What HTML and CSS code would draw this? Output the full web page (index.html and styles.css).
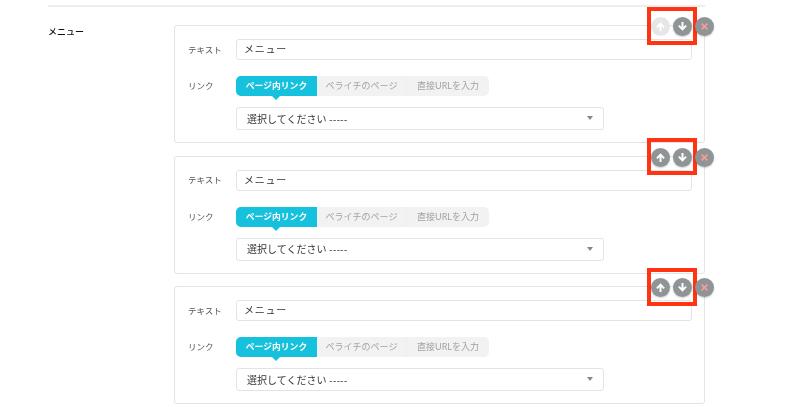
FILE: index.html
```html
<!DOCTYPE html>
<html lang="ja">
<head>
<meta charset="utf-8">
<title>メニュー</title>
<link rel="stylesheet" href="styles.css">
</head>
<body>
<svg class="defs" width="0" height="0" aria-hidden="true">
  <symbol id="up" viewBox="0 0 19 19"><path d="M9.5 5.2 13.8 9.8 12.500 11 10.500 9v5h-2V9l-2 2-1.300-1.200z"/></symbol>
  <symbol id="down" viewBox="0 0 19 19"><path d="M9.5 13.800 5.200 9.200 6.500 8l2 2V5h2v5l2-2 1.300 1.200z"/></symbol>
  <symbol id="x" viewBox="0 0 19 19"><path d="m7.300 6 2.200 2.200L11.700 6 13 7.300 10.800 9.500 13 11.700 11.700 13 9.500 10.800 7.300 13 6 11.700 8.200 9.500 6 7.300z"/></symbol>
</svg>
<main class="section">
  <div class="row">
    <div class="row-label">メニュー</div>
    <div class="cards">
      <section class="card">
        <div class="field field-text"><span class="field-label">テキスト</span><div class="input">メニュー</div></div>
        <div class="field field-link"><span class="field-label">リンク</span>
          <div class="tabs"><span class="tab tab-active">ページ内リンク</span><span class="tab tab-b">ペライチのページ</span><span class="tab tab-c">直接URLを入力</span></div>
        </div>
        <div class="select"><span>選択してください -----</span><i class="caret"></i></div>
        <div class="highlight"></div>
        <div class="actions">
          <span class="btn btn-off"><svg><use href="#up"/></svg></span>
          <span class="btn"><svg><use href="#down"/></svg></span>
          <span class="btn btn-x"><svg><use href="#x"/></svg></span>
        </div>
      </section>
      <section class="card">
        <div class="field field-text"><span class="field-label">テキスト</span><div class="input">メニュー</div></div>
        <div class="field field-link"><span class="field-label">リンク</span>
          <div class="tabs"><span class="tab tab-active">ページ内リンク</span><span class="tab tab-b">ペライチのページ</span><span class="tab tab-c">直接URLを入力</span></div>
        </div>
        <div class="select"><span>選択してください -----</span><i class="caret"></i></div>
        <div class="highlight"></div>
        <div class="actions">
          <span class="btn"><svg><use href="#up"/></svg></span>
          <span class="btn"><svg><use href="#down"/></svg></span>
          <span class="btn btn-x"><svg><use href="#x"/></svg></span>
        </div>
      </section>
      <section class="card">
        <div class="field field-text"><span class="field-label">テキスト</span><div class="input">メニュー</div></div>
        <div class="field field-link"><span class="field-label">リンク</span>
          <div class="tabs"><span class="tab tab-active">ページ内リンク</span><span class="tab tab-b">ペライチのページ</span><span class="tab tab-c">直接URLを入力</span></div>
        </div>
        <div class="select"><span>選択してください -----</span><i class="caret"></i></div>
        <div class="highlight"></div>
        <div class="actions">
          <span class="btn"><svg><use href="#up"/></svg></span>
          <span class="btn"><svg><use href="#down"/></svg></span>
          <span class="btn btn-x"><svg><use href="#x"/></svg></span>
        </div>
      </section>
    </div>
  </div>
</main>
</body>
</html>
```
FILE: styles.css
```css
* { box-sizing: border-box; }
html, body { margin: 0; height: 407px; overflow: hidden; background: #fff; }
body { font-family: Lato, "Noto Sans CJK JP", sans-serif; color: #333; font-size: 10px; }
.defs { position: absolute; }
.section { margin: 5px 95px 0 48px; border-top: 2px solid #eeeeee; padding-top: 18px; filter: blur(.3px); }
.row { display: flex; }
.row-label { width: 126px; color: #111; font-size: 9px; line-height: 14px; font-weight: 500; }
.cards { flex: 1; display: flex; flex-direction: column; gap: 12.5px; }
.card { position: relative; height: 118px; border: 1px solid #e3e3e3; border-radius: 3px; padding: 13px 12px 0 13px; }
.field { display: flex; align-items: center; }
.field-label { width: 48px; font-size: 8.5px; color: #555; padding-bottom: 2px; }
.field-text { height: 21px; }
.input { flex: 1; height: 21px; border: 1px solid #e3e3e3; border-radius: 3px; padding-left: 7px; font-size: 10px; line-height: 18px; letter-spacing: .75px; color: #333; }
.field-link { margin-top: 16px; height: 20px; }
.tabs { display: flex; width: 253px; height: 20px; border-radius: 5px; background: #f2f2f2; }
.tab { display: flex; align-items: center; justify-content: center; font-size: 9px; color: #a3a3a3; position: relative; padding-bottom: 1px; }
.tab-active { width: 81px; background: #15c1dc; color: #fff; font-weight: 700; font-size: 8.8px; border-radius: 5px 0 0 5px; }
.tab-active::after { content: ""; position: absolute; left: 36px; top: 20px; border: 4px solid transparent; border-top: 4px solid #15c1dc; border-bottom: 0; }
.tab-b { width: 90px; border-right: 1px solid #eee; }
.tab-c { flex: 1; }
.select { margin: 11px 0 0 48px; width: 368px; height: 23px; border: 1px solid #e3e3e3; border-radius: 3px; padding: 0 10px 1px 10px; display: flex; align-items: center; justify-content: space-between; font-size: 10px; color: #333; }
.caret { border: 3.5px solid transparent; border-top: 4px solid #888; border-bottom: 0; }
.highlight { position: absolute; left: 472px; top: -19px; width: 50px; height: 37.5px; border: 4px solid #ff3412; }
.actions { position: absolute; left: 476px; top: -9px; display: flex; gap: 3px; }
.btn { width: 19px; height: 19px; border-radius: 50%; background: #8f9596; box-shadow: 0 1px 2px rgba(0,0,0,.2); display: block; }
.btn svg { display: block; width: 19px; height: 19px; fill: #fff; }
.btn-off { background: #e6e6e6; box-shadow: none; }
.btn-x svg { fill: #f49b98; }
```
